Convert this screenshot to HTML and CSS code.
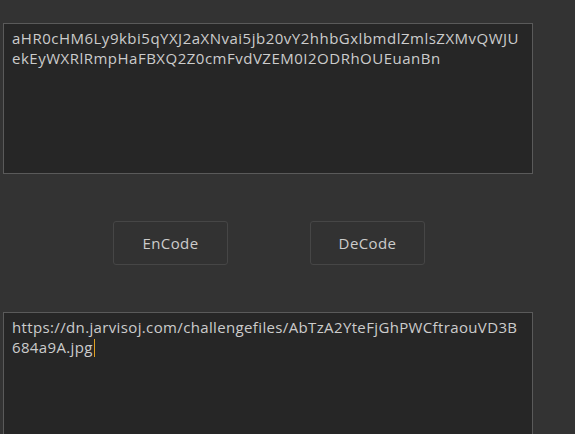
FILE: index.html
```html
<!DOCTYPE html>
<html>
<head>
<meta charset="utf-8">
<link rel="stylesheet" href="styles.css">
</head>
<body>
<div class="page">
  <div class="box box-top">
    <div class="line">aHR0cHM6Ly9kbi5qYXJ2aXNvai5jb20vY2hhbGxlbmdlZmlsZXMvQWJU</div>
    <div class="line">ekEyWXRlRmpHaFBXQ2Z0cmFvdVZEM0I2ODRhOUEuanBn</div>
  </div>
  <div class="actions">
    <button class="btn">EnCode</button>
    <button class="btn">DeCode</button>
  </div>
  <div class="box box-bottom">
    <div class="line">https://dn.jarvisoj.com/challengefiles/AbTzA2YteFjGhPWCftraouVD3B</div>
    <div class="line">684a9A.jpg<span class="caret"></span></div>
  </div>
</div>
</body>
</html>
```

FILE: styles.css
```css
html, body {
  margin: 0;
  padding: 0;
  background: #333333;
  overflow: hidden;
}
.page {
  width: 575px;
  height: 434px;
  padding: 23px 0 0 3px;
  box-sizing: border-box;
  display: flex;
  flex-direction: column;
  font-family: "Open Sans", "Noto Sans", sans-serif;
}
.box {
  flex-shrink: 0;
  width: 530px;
  box-sizing: border-box;
  background: #262626;
  border: 1px solid #5a5a5a;
  padding: 4px 0 0 8px;
  color: #cccccc;
  font-size: 15px;
  letter-spacing: 0.5px;
  line-height: 20px;
}
.box-top {
  height: 151px;
}
.box-bottom {
  height: 140px;
  border-bottom: none;
  letter-spacing: 0.36px;
}
.line {
  white-space: nowrap;
}
.caret {
  display: inline-block;
  width: 1px;
  height: 18px;
  background: #e0a020;
  vertical-align: -4px;
  margin-left: 1px;
}
.actions {
  flex-shrink: 0;
  display: flex;
  gap: 82px;
  padding: 47px 0 47px 110px;
}
.btn {
  width: 115px;
  height: 44px;
  box-sizing: border-box;
  background: #323232;
  border: 1px solid #464646;
  border-radius: 3px;
  color: #cccccc;
  font-family: "Open Sans", "Noto Sans", sans-serif;
  font-size: 15px;
  letter-spacing: 0.4px;
  padding: 0;
}
```
